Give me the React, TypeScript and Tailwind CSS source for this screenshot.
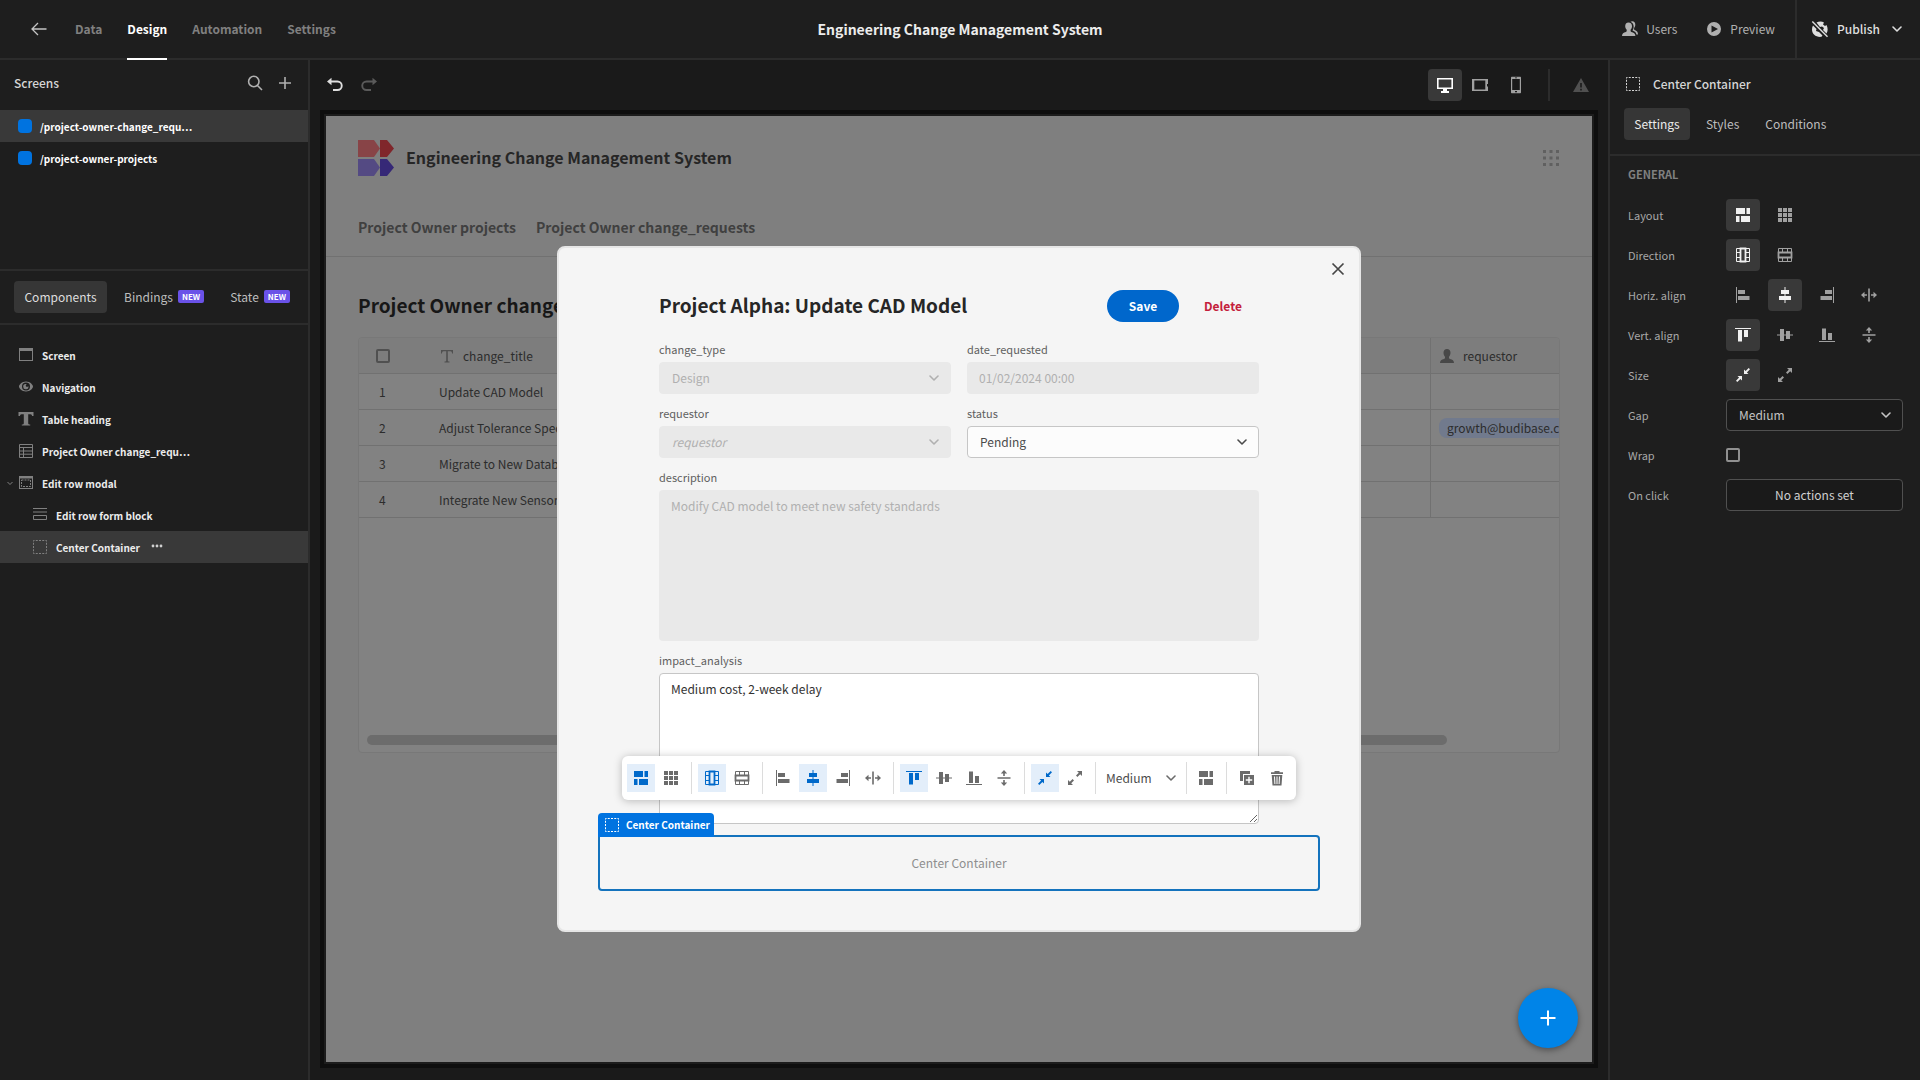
import type { ReactNode } from "react";
import clsx from "clsx";

type IconProps = { className?: string };

function Svg({
  children,
  className,
  size = 18,
}: {
  children: ReactNode;
  className?: string;
  size?: number;
}) {
  return (
    <svg
      viewBox="0 0 18 18"
      width={size}
      height={size}
      fill="currentColor"
      aria-hidden="true"
      className={clsx("shrink-0", className)}
    >
      {children}
    </svg>
  );
}

const FlexIcon = () => (
  <Svg>
    <path d="M2 2h9v6H2zM12.500 2H16v6h-3.500zM2 10h3.500v6H2zM7 10h9v6H7z" />
  </Svg>
);

const GridIcon = ({ className }: IconProps) => (
  <Svg className={className}>
    <path d="M2 2h4v4H2zM7 2h4v4H7zM12 2h4v4h-4zM2 7h4v4H2zM7 7h4v4H7zM12 7h4v4h-4zM2 12h4v4H2zM7 12h4v4H7zM12 12h4v4h-4z" />
  </Svg>
);

const columnPath = (
  <g fill="none" stroke="currentColor">
    <path d="M2.500 2.500h13v13h-13zM2 6.500h4M2 11.500h4M12 6.500h4M12 11.500h4" />
    <path d="M6.500 2.500h5v13h-5z" strokeWidth="1.800" />
  </g>
);

const ColumnIcon = () => <Svg>{columnPath}</Svg>;
const RowIcon = () => (
  <Svg>
    <g transform="rotate(90 9 9)">{columnPath}</g>
  </Svg>
);

const startPath = <path d="M2 1h1v16H2zM4 4h7v4H4zM4 10h11.500v4H4z" />;
const centerPath = (
  <path d="M8.500 1h1v3H13v4H9.500v2H15v4H9.500v3h-1v-3H3v-4h5.500V8H5V4h3.500z" />
);
const endPath = <path d="M15 1h1v16h-1zM7 4h7v4H7zM2.500 10H14v4H2.500z" />;
const stretchPath = (
  <path d="M8.200 2.500h1.600v13H8.200zM1 9l3.500-3.200V8.200h2.500v1.600H4.500v2.400zM17 9l-3.500-3.200V8.200H11v1.600h2.500v2.400z" />
);

const AlignIcon = ({ shape, vertical }: { shape: ReactNode; vertical?: boolean }) => (
  <Svg>
    <g transform={vertical ? "rotate(90 9 9)" : undefined}>{shape}</g>
  </Svg>
);

const ShrinkIcon = () => (
  <Svg>
    <path d="M10 3.500v4.500h4.500l-1.600-1.600L16 3.300 14.700 2l-3.100 3.100zM8 14.500V10H3.500l1.600 1.600L2 14.700 3.300 16l3.100-3.100z" />
  </Svg>
);

const ExpandIcon = () => (
  <Svg>
    <path d="M16 2h-5l1.800 1.800L10 6.600 11.400 8l2.800-2.800L16 7zM2 16h5l-1.800-1.800L8 11.400 6.600 10l-2.800 2.800L2 11z" />
  </Svg>
);

const ContainerIcon = ({ className }: IconProps) => (
  <Svg className={className}>
    <path
      d="M2.500 2.500h13v13h-13z"
      fill="none"
      stroke="currentColor"
      strokeDasharray="2 1.250"
      strokeDashoffset="1"
    />
  </Svg>
);

const ChevronIcon = ({ className }: IconProps) => (
  <svg
    viewBox="0 0 10 6"
    width="10"
    height="6"
    fill="none"
    stroke="currentColor"
    strokeWidth="1.600"
    strokeLinecap="round"
    strokeLinejoin="round"
    aria-hidden="true"
    className={clsx("pointer-events-none shrink-0", className)}
  >
    <path d="M1 1l4 4 4-4" />
  </svg>
);

const PlusIcon = ({ className }: IconProps) => (
  <Svg className={className}>
    <path d="M8.200 3h1.600v5.200H15v1.600H9.800V15H8.200V9.800H3V8.200h5.200z" />
  </Svg>
);

const UserIcon = ({ className }: IconProps) => (
  <Svg className={className}>
    <path d="M9 2c2.200 0 3.500 1.500 3.500 3.800 0 1.600-.7 3-1.500 3.900v1.200c0 .5.400.8 1 1C14.500 12.700 16 13.200 16 16H2c0-2.800 1.500-3.300 4-4.100.6-.2 1-.5 1-1V9.700C6.200 8.800 5.500 7.400 5.500 5.800 5.500 3.500 6.800 2 9 2z" />
  </Svg>
);

const UsersIcon = () => (
  <Svg>
    <path d="M7.500 2.500c2.300 0 3.500 1.500 3.500 3.800 0 1.500-.6 2.700-1.400 3.500v1.200c0 .5.300.8.800 1 2.300.8 4 1.500 4 4H1c0-2.500 1.500-3.200 3.900-4 .5-.2.800-.5.800-1V9.800C4.900 9 4.200 7.800 4.200 6.300 4.200 4 5.300 2.500 7.500 2.500z" />
    <path d="M9.500 1.700c.5-.3 1.100-.5 1.800-.5 1.900 0 3 1.400 3 3.500 0 1.400-.5 2.500-1.200 3.200v1.300c0 .4.200.6.700.9 1.800.8 3.200 1.900 3.200 4.400h-1.600c-.3-2.200-1.700-3.200-3.900-4 .8-1.100 1.300-2.700 1.100-4.500-.2-2-1.300-3.700-3.100-4.300z" />
  </Svg>
);

const PlayIcon = () => (
  <Svg>
    <path
      fillRule="evenodd"
      d="M9 2a7 7 0 110 14A7 7 0 019 2zM6.500 5.500v7L13 9z"
    />
  </Svg>
);

const PublishOffIcon = () => (
  <Svg>
    <path d="M1.800 1l15.200 15.200-1 1L.8 2z" />
    <path d="M5.500 2.500C8 1 11 1 13 2.500l-1 2 2 1.500 1.500-1C17 8 17 11 15.500 13.500L12 10l1-2-2-1.500-2 .5zM2 5.500L5.500 9l-.5 2 3 1 3.500 3.500-1 1.300C5 17.500 1 14 1 9.500 1 8 1.400 6.600 2 5.500z" />
  </Svg>
);

const UndoIcon = ({ className }: IconProps) => (
  <Svg className={className}>
    <path
      d="M4 5.500h7.500a4 4 0 010 8.500H7"
      fill="none"
      stroke="currentColor"
      strokeWidth="1.900"
    />
    <path d="M1 5.500L5.500 1.800v7.400z" />
  </Svg>
);

const ScreenIcon = () => (
  <Svg>
    <path fillRule="evenodd" d="M2 2h14v13H2zm1 3v9h12V5z" />
  </Svg>
);

const EyeIcon = () => (
  <Svg>
    <path
      fillRule="evenodd"
      d="M9 3.500c4 0 7 3.200 7 5 0 1.900-3 5-7 5s-7-3.100-7-5c0-1.800 3-5 7-5zM9 4.500a4 4 0 100 8 4 4 0 000-8zM9 6c.4 0 .7.100 1 .2a1.300 1.300 0 101.300 1.700A2.600 2.600 0 119 6z"
    />
  </Svg>
);

const TextIcon = () => (
  <Svg>
    <path d="M1.500 2h15v4H15c0-1-.5-1.700-1.500-1.700H11.200v9c0 .8.500 1.200 2 1.200V15.500H4.800v-1c1.500 0 2-.4 2-1.200v-9H4.500C3.500 4.300 3 5 3 6H1.500z" />
  </Svg>
);

const ThinTextIcon = () => (
  <Svg>
    <path d="M3 3h12v3.500h-1C14 5 13.500 4.300 12.500 4.300H9.800v9.200c0 .7.400 1 1.700 1v1h-5v-1c1.300 0 1.700-.3 1.700-1V4.300H5.500C4.500 4.300 4 5 4 6.500H3z" />
  </Svg>
);

const TableIcon = () => (
  <Svg>
    <path
      d="M2.500 2.500h13v13h-13zM2 5.500h14M2 9h14M2 12.200h14M6.500 5.500v10"
      fill="none"
      stroke="currentColor"
    />
  </Svg>
);

const ModalIcon = () => (
  <Svg>
    <path fillRule="evenodd" d="M2 2h14v13H2zm1 2.500V14h12V4.500z" />
    <path
      d="M4.500 6h9v6.500h-9z"
      fill="none"
      stroke="currentColor"
      strokeDasharray="2 1"
    />
  </Svg>
);

const FormIcon = () => (
  <Svg>
    <path d="M2 2h14v1H2zM2 5.500h14v1H2z" />
    <path d="M2.500 9.500h13v4h-13z" fill="none" stroke="currentColor" />
  </Svg>
);

const DesktopIcon = () => (
  <Svg>
    <path fillRule="evenodd" d="M1 2h16v11h-6v2h2v2H5v-2h2v-2H1zm1.600 1.600v7.800h12.800V3.600z" />
  </Svg>
);

const TabletIcon = () => (
  <Svg>
    <path fillRule="evenodd" d="M1 3h16v5h-1v2.500h1V15H1zm2.300 1.600v8.800h11V4.600z" />
  </Svg>
);

const PhoneIcon = () => (
  <Svg>
    <path
      fillRule="evenodd"
      d="M5 .8h8c.6 0 1 .4 1 1v14.400c0 .6-.4 1-1 1H5c-.6 0-1-.4-1-1V1.800c0-.6.4-1 1-1zM5.200 3v11h7.600V3zM8 1.500v.8h2v-.8zM8 15v1.300h2V15z"
    />
  </Svg>
);

const AlertIcon = ({ className }: IconProps) => (
  <Svg className={className}>
    <path fillRule="evenodd" d="M9 2l8 14H1zM8.200 7v4.500h1.600V7zM8.200 12.700v1.700h1.600v-1.700z" />
  </Svg>
);

const DuplicateIcon = () => (
  <Svg>
    <path d="M2 2h10v3H5v7H2z" />
    <path fillRule="evenodd" d="M6 6h10v10H6zm4.300 1.800v2.500H7.800v1.400h2.500v2.500h1.400v-2.500h2.500v-1.400h-2.500V7.800z" />
  </Svg>
);

const TrashIcon = () => (
  <Svg>
    <path d="M6.500 2h5v1.200H15V5H3V3.200h3.500z" />
    <path
      fillRule="evenodd"
      d="M3.700 6h10.600l-.8 10.500h-9zM6 7.500l.4 7.500h1L7 7.500zm2.500 0V15h1V7.500zm2.500 0l-.4 7.500h1l.4-7.500z"
    />
  </Svg>
);

const navItems = ["Data", "Design", "Automation", "Settings"];
const screens = ["/project-owner-change_requ…", "/project-owner-projects"];

const tree = [
  { label: "Screen", icon: <ScreenIcon /> },
  { label: "Navigation", icon: <EyeIcon /> },
  { label: "Table heading", icon: <TextIcon /> },
  { label: "Project Owner change_requ…", icon: <TableIcon /> },
  { label: "Edit row modal", icon: <ModalIcon />, open: true },
  { label: "Edit row form block", icon: <FormIcon />, nested: true },
  { label: "Center Container", icon: <ContainerIcon />, nested: true, active: true },
];

const groups = [
  {
    label: "Layout",
    selected: 0,
    options: [
      { name: "Flex", icon: <FlexIcon /> },
      { name: "Grid", icon: <GridIcon /> },
    ],
  },
  {
    label: "Direction",
    selected: 0,
    options: [
      { name: "Column", icon: <ColumnIcon /> },
      { name: "Row", icon: <RowIcon /> },
    ],
  },
  {
    label: "Horiz. align",
    selected: 1,
    options: [
      { name: "Left", icon: <AlignIcon shape={startPath} /> },
      { name: "Center", icon: <AlignIcon shape={centerPath} /> },
      { name: "Right", icon: <AlignIcon shape={endPath} /> },
      { name: "Stretch", icon: <AlignIcon shape={stretchPath} /> },
    ],
  },
  {
    label: "Vert. align",
    selected: 0,
    options: [
      { name: "Top", icon: <AlignIcon shape={startPath} vertical /> },
      { name: "Middle", icon: <AlignIcon shape={centerPath} vertical /> },
      { name: "Bottom", icon: <AlignIcon shape={endPath} vertical /> },
      { name: "Stretch", icon: <AlignIcon shape={stretchPath} vertical /> },
    ],
  },
  {
    label: "Size",
    selected: 0,
    options: [
      { name: "Shrink", icon: <ShrinkIcon /> },
      { name: "Grow", icon: <ExpandIcon /> },
    ],
  },
];

const rows = [
  { title: "Update CAD Model" },
  { title: "Adjust Tolerance Specs", requestor: "growth@budibase.com" },
  { title: "Migrate to New Database" },
  { title: "Integrate New Sensors" },
];

function Header() {
  return (
    <header className="flex h-15 shrink-0 items-stretch border-b-2 border-[#2c2c2c] text-xs">
      <div className="flex flex-1 items-stretch">
        <button type="button" aria-label="Back" className="ml-[30px] text-[#c4c4c4]">
          <Svg>
            <path
              d="M16.500 9H2.500M8 3L2 9l6 6"
              fill="none"
              stroke="currentColor"
              strokeWidth="1.300"
            />
          </Svg>
        </button>
        <nav className="ml-[27px] flex gap-[25px]">
          {navItems.map((item) => (
            <a
              key={item}
              href="#"
              className={clsx(
                "-mb-[2px] flex items-center border-b-2 font-semibold",
                item === "Design"
                  ? "border-white text-white"
                  : "border-transparent text-[#808080]",
              )}
            >
              {item}
            </a>
          ))}
        </nav>
      </div>
      <h1 className="flex items-center text-sm font-semibold text-[#ececec]">
        Engineering Change Management System
      </h1>
      <div className="flex flex-1 items-stretch justify-end text-[#b0b0b0]">
        <button type="button" className="flex items-center gap-[7px]">
          <UsersIcon />
          Users
        </button>
        <button type="button" className="mr-5 ml-7 flex items-center gap-[7px]">
          <PlayIcon />
          Preview
        </button>
        <button
          type="button"
          className="flex items-center gap-2 border-l-2 border-[#2c2c2c] pr-[18px] pl-3.5 font-medium text-[#dedede]"
        >
          <PublishOffIcon />
          Publish
          <ChevronIcon className="ml-1" />
        </button>
      </div>
    </header>
  );
}

function NewBadge() {
  return (
    <span className="flex h-[13px] items-center rounded-xs bg-[#6a52e8] px-1 text-[8px] leading-none font-bold text-white">
      NEW
    </span>
  );
}

function LeftPanel() {
  return (
    <aside className="flex w-[310px] shrink-0 flex-col border-r-2 border-[#2c2c2c]">
      <div className="h-[211px] border-b-2 border-[#2c2c2c]">
        <div className="flex h-[50px] items-center px-3.5 pb-1">
          <h2 className="flex-1 text-xs font-medium text-[#d5d5d5]">Screens</h2>
          <button type="button" aria-label="Search" className="text-[#b0b0b0]">
            <Svg>
              <path
                d="M11.500 11.500L16 16M13 7.500a5.200 5.200 0 11-10.400 0 5.200 5.200 0 0110.400 0z"
                fill="none"
                stroke="currentColor"
                strokeWidth="1.600"
              />
            </Svg>
          </button>
          <button type="button" aria-label="Add screen" className="ml-3 text-[#b0b0b0]">
            <PlusIcon />
          </button>
        </div>
        <ul>
          {screens.map((screen, index) => (
            <li
              key={screen}
              className={clsx(
                "flex h-8 items-center gap-2 pl-[18px] text-[10px] font-bold text-white",
                index === 0 && "bg-[#393939]",
              )}
            >
              <span className="size-3.5 rounded-sm bg-[#0073e0]" />
              {screen}
            </li>
          ))}
        </ul>
      </div>

      <div className="flex h-[54px] shrink-0 items-center border-b-2 border-[#2c2c2c] px-3.5 pb-px text-xs text-[#bdbdbd]">
        <button type="button" className="h-8 w-[93px] rounded-sm bg-[#363636] text-[#dedede]">
          Components
        </button>
        <button type="button" className="ml-[17px] flex items-center gap-[5px]">
          Bindings
          <NewBadge />
        </button>
        <button type="button" className="ml-[26px] flex items-center gap-[5px]">
          State
          <NewBadge />
        </button>
      </div>

      <ul className="pt-3.5">
        {tree.map((node) => (
          <li
            key={node.label}
            className={clsx(
              "flex h-8 items-center text-[10px] font-bold text-[#ececec]",
              node.active && "bg-[#393939]",
              node.nested ? "pl-[31px]" : "pl-[5px]",
            )}
          >
            {!node.nested && (
              <span className="w-3 text-[#808080]">
                {node.open && (
                  <svg viewBox="0 0 10 10" width="10" height="10" aria-hidden="true">
                    <path d="M2.500 4L5 6.500 7.500 4" fill="none" stroke="currentColor" />
                  </svg>
                )}
              </span>
            )}
            <span className="mr-[7px] text-[#808080]">{node.icon}</span>
            {node.label}
            {node.active && (
              <button type="button" aria-label="More actions" className="ml-2 text-[#d0d0d0]">
                <Svg>
                  <circle cx="5" cy="8" r="1.400" />
                  <circle cx="9" cy="8" r="1.400" />
                  <circle cx="13" cy="8" r="1.400" />
                </Svg>
              </button>
            )}
          </li>
        ))}
      </ul>
    </aside>
  );
}

function CanvasToolbar() {
  return (
    <div className="flex h-[50px] shrink-0 items-center pl-1.5 text-[#a0a0a0]">
      <button type="button" aria-label="Undo" className="text-[#dedede]">
        <UndoIcon />
      </button>
      <button type="button" aria-label="Redo" className="ml-4 text-[#5a5a5a]">
        <UndoIcon className="-scale-x-100" />
      </button>
      <div className="ml-auto flex items-center">
        <button
          type="button"
          aria-label="Desktop"
          className="flex h-8 w-[34px] items-center justify-center rounded-sm bg-[#393939] text-white"
        >
          <DesktopIcon />
        </button>
        <button type="button" aria-label="Tablet" className="flex h-8 w-9 items-center justify-center">
          <TabletIcon />
        </button>
        <button type="button" aria-label="Mobile" className="flex h-8 w-9 items-center justify-center">
          <PhoneIcon />
        </button>
      </div>
      <div className="mx-3.5 h-8 w-0.5 bg-[#2c2c2c]" />
      <button type="button" aria-label="Warnings" className="mx-2 text-[#505050]">
        <AlertIcon />
      </button>
    </div>
  );
}

function DataTable() {
  return (
    <div className="flex h-[416px] flex-col overflow-hidden rounded-sm border border-[#787878] bg-[#828282]">
      <table className="w-full table-fixed border-separate border-spacing-0 text-left text-xs text-[#2c2c2c]">
        <colgroup>
          <col className="w-[71px]" />
          <col />
          <col className="w-[129px]" />
        </colgroup>
        <thead>
          <tr className="h-9 bg-[#7d7d7d]">
            <th className="border-b border-[#717171] p-0 pl-[17px]">
              <input
                type="checkbox"
                aria-label="Select all rows"
                className="block size-3.5 appearance-none rounded-xs border-2 border-[#505050]"
              />
            </th>
            <th className="border-b border-[#717171] p-0 font-normal">
              <span className="flex items-center gap-[7px] pl-2">
                <span className="text-[#505050]">
                  <ThinTextIcon />
                </span>
                change_title
              </span>
            </th>
            <th className="border-b border-l border-[#717171] p-0 font-normal">
              <span className="flex items-center gap-[7px] pl-[7px]">
                <UserIcon className="text-[#484848]" />
                requestor
              </span>
            </th>
          </tr>
        </thead>
        <tbody>
          {rows.map((row, index) => (
            <tr key={row.title} className="h-9">
              <td className="border-b border-[#717171] p-0 pl-5">{index + 1}</td>
              <td className="border-b border-[#717171] p-0 pl-[9px]">{row.title}</td>
              <td className="overflow-hidden border-b border-l border-[#717171] p-0 pl-2">
                {row.requestor && (
                  <span className="flex h-5 w-40 items-center rounded-lg bg-[#717a8d] pl-2">
                    {row.requestor}
                  </span>
                )}
              </td>
            </tr>
          ))}
        </tbody>
      </table>
      <div className="mt-auto mb-[7px] ml-2 h-2.5 w-9/10 rounded-full bg-[#6c6c6c]" />
    </div>
  );
}

function AppPage() {
  return (
    <>
      <header className="flex h-[84px] items-center px-8">
        <svg viewBox="0 0 36 36" width="36" height="36" aria-hidden="true">
          <path d="M0 0h16l6 8.500L16 17H0z" fill="#884447" />
          <path d="M22 0h7l7 8.500-7 8.500h-7z" fill="#80262b" />
          <path d="M0 19h16l6 8.500-6 8.500H0z" fill="#544a83" />
          <path d="M22 19h7l7 8.500-7 8.500h-7z" fill="#362877" />
        </svg>
        <h2 className="ml-3 flex-1 pb-0.5 text-base font-semibold text-[#262626]">
          Engineering Change Management System
        </h2>
        <button type="button" aria-label="Apps" className="text-[#606060]">
          <Svg>
            <path d="M1 1h3v3H1zM7.500 1h3v3h-3zM14 1h3v3h-3zM1 7.500h3v3H1zM7.500 7.500h3v3h-3zM14 7.500h3v3h-3zM1 14h3v3H1zM7.500 14h3v3h-3zM14 14h3v3h-3z" />
          </Svg>
        </button>
      </header>
      <nav className="flex h-[57px] items-center gap-5 border-b border-[#717171] px-8 pb-0.5 text-sm font-semibold text-[#404040]">
        <a href="#">Project Owner projects</a>
        <a href="#">Project Owner change_requests</a>
      </nav>
      <main className="px-8 pt-8">
        <h2 className="mb-4 text-[19px] leading-8 font-semibold text-[#171717]">
          Project Owner change_requests
        </h2>
        <DataTable />
      </main>
    </>
  );
}

function Field({ label, id, children }: { label: string; id: string; children: ReactNode }) {
  return (
    <div className="flex flex-col gap-0.5">
      <label htmlFor={id} className="text-[11px] leading-[22px] text-[#606060]">
        {label}
      </label>
      {children}
    </div>
  );
}

function FormSelect({ id, value, disabled }: { id: string; value: string; disabled?: boolean }) {
  return (
    <div
      className={clsx(
        "relative flex h-8 items-center",
        disabled ? "text-[#b0b0b0]" : "text-[#4b4b4b]",
      )}
    >
      <select
        id={id}
        disabled={disabled}
        className={clsx(
          "size-full appearance-none rounded-sm border px-3 text-xs opacity-100",
          disabled ? "border-[#e9e9e9] bg-[#e9e9e9]" : "border-[#c6c6c6] bg-[#fcfcfc]",
          value === "requestor" && "italic",
        )}
      >
        <option>{value}</option>
      </select>
      <ChevronIcon className="absolute right-3" />
    </div>
  );
}

function FloatingToolbar() {
  const separator = "mx-1 h-8 w-px bg-[#dcdcdc]";
  const button = "flex size-7 items-center justify-center";

  return (
    <div className="absolute bottom-[89px] left-1/2 flex h-11 w-[674px] -translate-x-1/2 items-center gap-0.5 rounded-md bg-white px-[5px] text-[#6b6b6b] shadow-[0_1px_8px_rgba(0,0,0,0.25)]">
      {groups.map((group) => (
        <div key={group.label} className="flex items-center gap-0.5">
          {group.options.map((option, index) => (
            <button
              key={option.name}
              type="button"
              aria-label={`${group.label} ${option.name}`}
              className={clsx(button, index === group.selected && "bg-[#e3eefa] text-[#0069ca]")}
            >
              {option.icon}
            </button>
          ))}
          <div className={separator} />
        </div>
      ))}
      <div className="relative flex h-7 w-[78px] items-center">
        <select
          aria-label="Gap"
          className="size-full appearance-none pl-1 text-xs text-[#4b4b4b]"
        >
          <option>Medium</option>
        </select>
        <ChevronIcon className="absolute right-1" />
      </div>
      <div className={separator} />
      <button type="button" aria-label="Wrap in container" className={button}>
        <FlexIcon />
      </button>
      <div className={separator} />
      <button type="button" aria-label="Duplicate" className={button}>
        <DuplicateIcon />
      </button>
      <button type="button" aria-label="Delete component" className={button}>
        <TrashIcon />
      </button>
    </div>
  );
}

function EditRowModal() {
  return (
    <div
      role="dialog"
      aria-label="Edit row"
      className="relative w-[804px] rounded-lg border-2 border-[#e6e6e6] bg-[#f5f5f5] px-[39px] pt-[42px] pb-[39px]"
    >
      <button type="button" aria-label="Close" className="absolute top-3 right-3 text-[#464646]">
        <Svg>
          <path d="M3.500 3.500l11 11M14.500 3.500l-11 11" stroke="currentColor" strokeWidth="1.700" />
        </Svg>
      </button>

      <form className="mx-auto w-[600px]">
        <div className="mb-4 flex h-8 items-center">
          <h2 className="flex-1 pb-0.5 text-[19px] leading-8 font-semibold text-[#262626]">
            Project Alpha: Update CAD Model
          </h2>
          <button
            type="button"
            className="h-8 w-[72px] rounded-full bg-[#0067cc] text-xs font-bold text-white"
          >
            Save
          </button>
          <button type="button" className="ml-2 h-8 w-[72px] text-xs font-bold text-[#c41e3c]">
            Delete
          </button>
        </div>
        <div className="grid grid-cols-2 gap-x-4 gap-y-2">
          <Field label="change_type" id="change_type">
            <FormSelect id="change_type" value="Design" disabled />
          </Field>
          <Field label="date_requested" id="date_requested">
            <input
              id="date_requested"
              disabled
              defaultValue="01/02/2024 00:00"
              className="h-8 rounded-sm bg-[#e9e9e9] px-3 pb-0.5 text-xs text-[#b0b0b0]"
            />
          </Field>
          <Field label="requestor" id="requestor">
            <FormSelect id="requestor" value="requestor" disabled />
          </Field>
          <Field label="status" id="status">
            <FormSelect id="status" value="Pending" />
          </Field>
          <div className="col-span-2">
            <Field label="description" id="description">
              <textarea
                id="description"
                disabled
                defaultValue="Modify CAD model to meet new safety standards"
                className="h-[151px] resize-none rounded-sm bg-[#e9e9e9] px-3 py-1.5 text-xs leading-5 text-[#b0b0b0]"
              />
            </Field>
          </div>
          <div className="col-span-2">
            <Field label="impact_analysis" id="impact_analysis">
              <textarea
                id="impact_analysis"
                defaultValue="Medium cost, 2-week delay"
                className="h-[151px] rounded-sm border border-[#c6c6c6] bg-white px-[11px] py-[5px] text-xs leading-5 text-[#323232]"
              />
            </Field>
          </div>
        </div>
      </form>

      <div className="relative mt-[11px] flex h-14 items-center justify-center rounded-sm rounded-tl-none border-2 border-[#1473bd] text-xs text-[#8e8e8e]">
        <div className="absolute bottom-[52px] -left-0.5 flex h-6 items-center gap-[5px] rounded-t-sm bg-[#0073e0] pr-1 pl-[5px] text-[10px] font-bold text-white">
          <ContainerIcon />
          Center Container
        </div>
        Center Container
        <FloatingToolbar />
      </div>
    </div>
  );
}

function Canvas() {
  return (
    <section className="flex min-w-0 flex-1 flex-col bg-[#1a1a1a] px-2.5 pb-3">
      <CanvasToolbar />
      <div className="flex flex-1 border-4 border-[#0e0e0e]">
        <div className="relative min-w-0 flex-1 border-2 border-[#1c1c1c] bg-[#7f7f7f]">
          <AppPage />
          <div className="absolute inset-0 flex items-center justify-center">
            <EditRowModal />
          </div>
          <button
            type="button"
            aria-label="Add component"
            className="absolute right-3.5 bottom-3.5 flex size-15 items-center justify-center rounded-full bg-[#0084e8] text-white shadow-[0_2px_6px_rgba(0,0,0,0.4)]"
          >
            <PlusIcon className="scale-125" />
          </button>
        </div>
      </div>
    </section>
  );
}

function SettingsPanel() {
  return (
    <aside className="w-[312px] shrink-0 border-l-2 border-[#2c2c2c] text-xs">
      <div className="h-24 border-b-2 border-[#2c2c2c] px-3.5">
        <div className="flex h-12 items-center gap-[11px] font-medium text-[#d5d5d5]">
          <ContainerIcon />
          Center Container
        </div>
        <div className="flex text-[#bdbdbd]">
          <button type="button" className="h-8 w-[66px] rounded-sm bg-[#363636] text-[#ececec]">
            Settings
          </button>
          <button type="button" className="h-8 px-4">
            Styles
          </button>
          <button type="button" className="h-8 px-2.5">
            Conditions
          </button>
        </div>
      </div>
      <div className="pr-[17px] pl-[18px]">
        <h3 className="mb-1.5 pt-1 text-[11px] leading-[29px] font-semibold text-[#808080]">
          GENERAL
        </h3>
        {groups.map((group) => (
          <div key={group.label} className="flex h-10 items-center">
            <span className="w-[98px] text-[11px] text-[#a8a8a8]">{group.label}</span>
            <div className="flex gap-2">
              {group.options.map((option, index) => (
                <button
                  key={option.name}
                  type="button"
                  aria-label={option.name}
                  className={clsx(
                    "flex h-8 w-[34px] items-center justify-center rounded-sm",
                    index === group.selected ? "bg-[#393939] text-[#f0f0f0]" : "text-[#a0a0a0]",
                  )}
                >
                  {option.icon}
                </button>
              ))}
            </div>
          </div>
        ))}
        <div className="flex h-10 items-center">
          <label htmlFor="gap" className="w-[98px] text-[11px] text-[#a8a8a8]">
            Gap
          </label>
          <div className="relative flex h-8 flex-1 items-center text-[#c4c4c4]">
            <select
              id="gap"
              className="size-full appearance-none rounded-sm border border-[#505050] bg-[#1a1a1a] px-3"
            >
              <option>Medium</option>
            </select>
            <ChevronIcon className="absolute right-3" />
          </div>
        </div>
        <div className="flex h-10 items-center">
          <label htmlFor="wrap" className="w-[98px] text-[11px] text-[#a8a8a8]">
            Wrap
          </label>
          <input
            id="wrap"
            type="checkbox"
            className="size-3.5 appearance-none rounded-xs border-2 border-[#909090]"
          />
        </div>
        <div className="flex h-10 items-center">
          <span className="w-[98px] text-[11px] text-[#a8a8a8]">On click</span>
          <button
            type="button"
            className="h-8 flex-1 rounded-sm border border-[#505050] bg-[#1a1a1a] text-[#d0d0d0]"
          >
            No actions set
          </button>
        </div>
      </div>
    </aside>
  );
}

export default function App() {
  return (
    <div className="flex min-h-screen flex-col bg-[#1e1e1e] font-['Noto_Sans_CJK_SC','Noto_Sans',sans-serif]">
      <Header />
      <div className="flex flex-1">
        <LeftPanel />
        <Canvas />
        <SettingsPanel />
      </div>
    </div>
  );
}
